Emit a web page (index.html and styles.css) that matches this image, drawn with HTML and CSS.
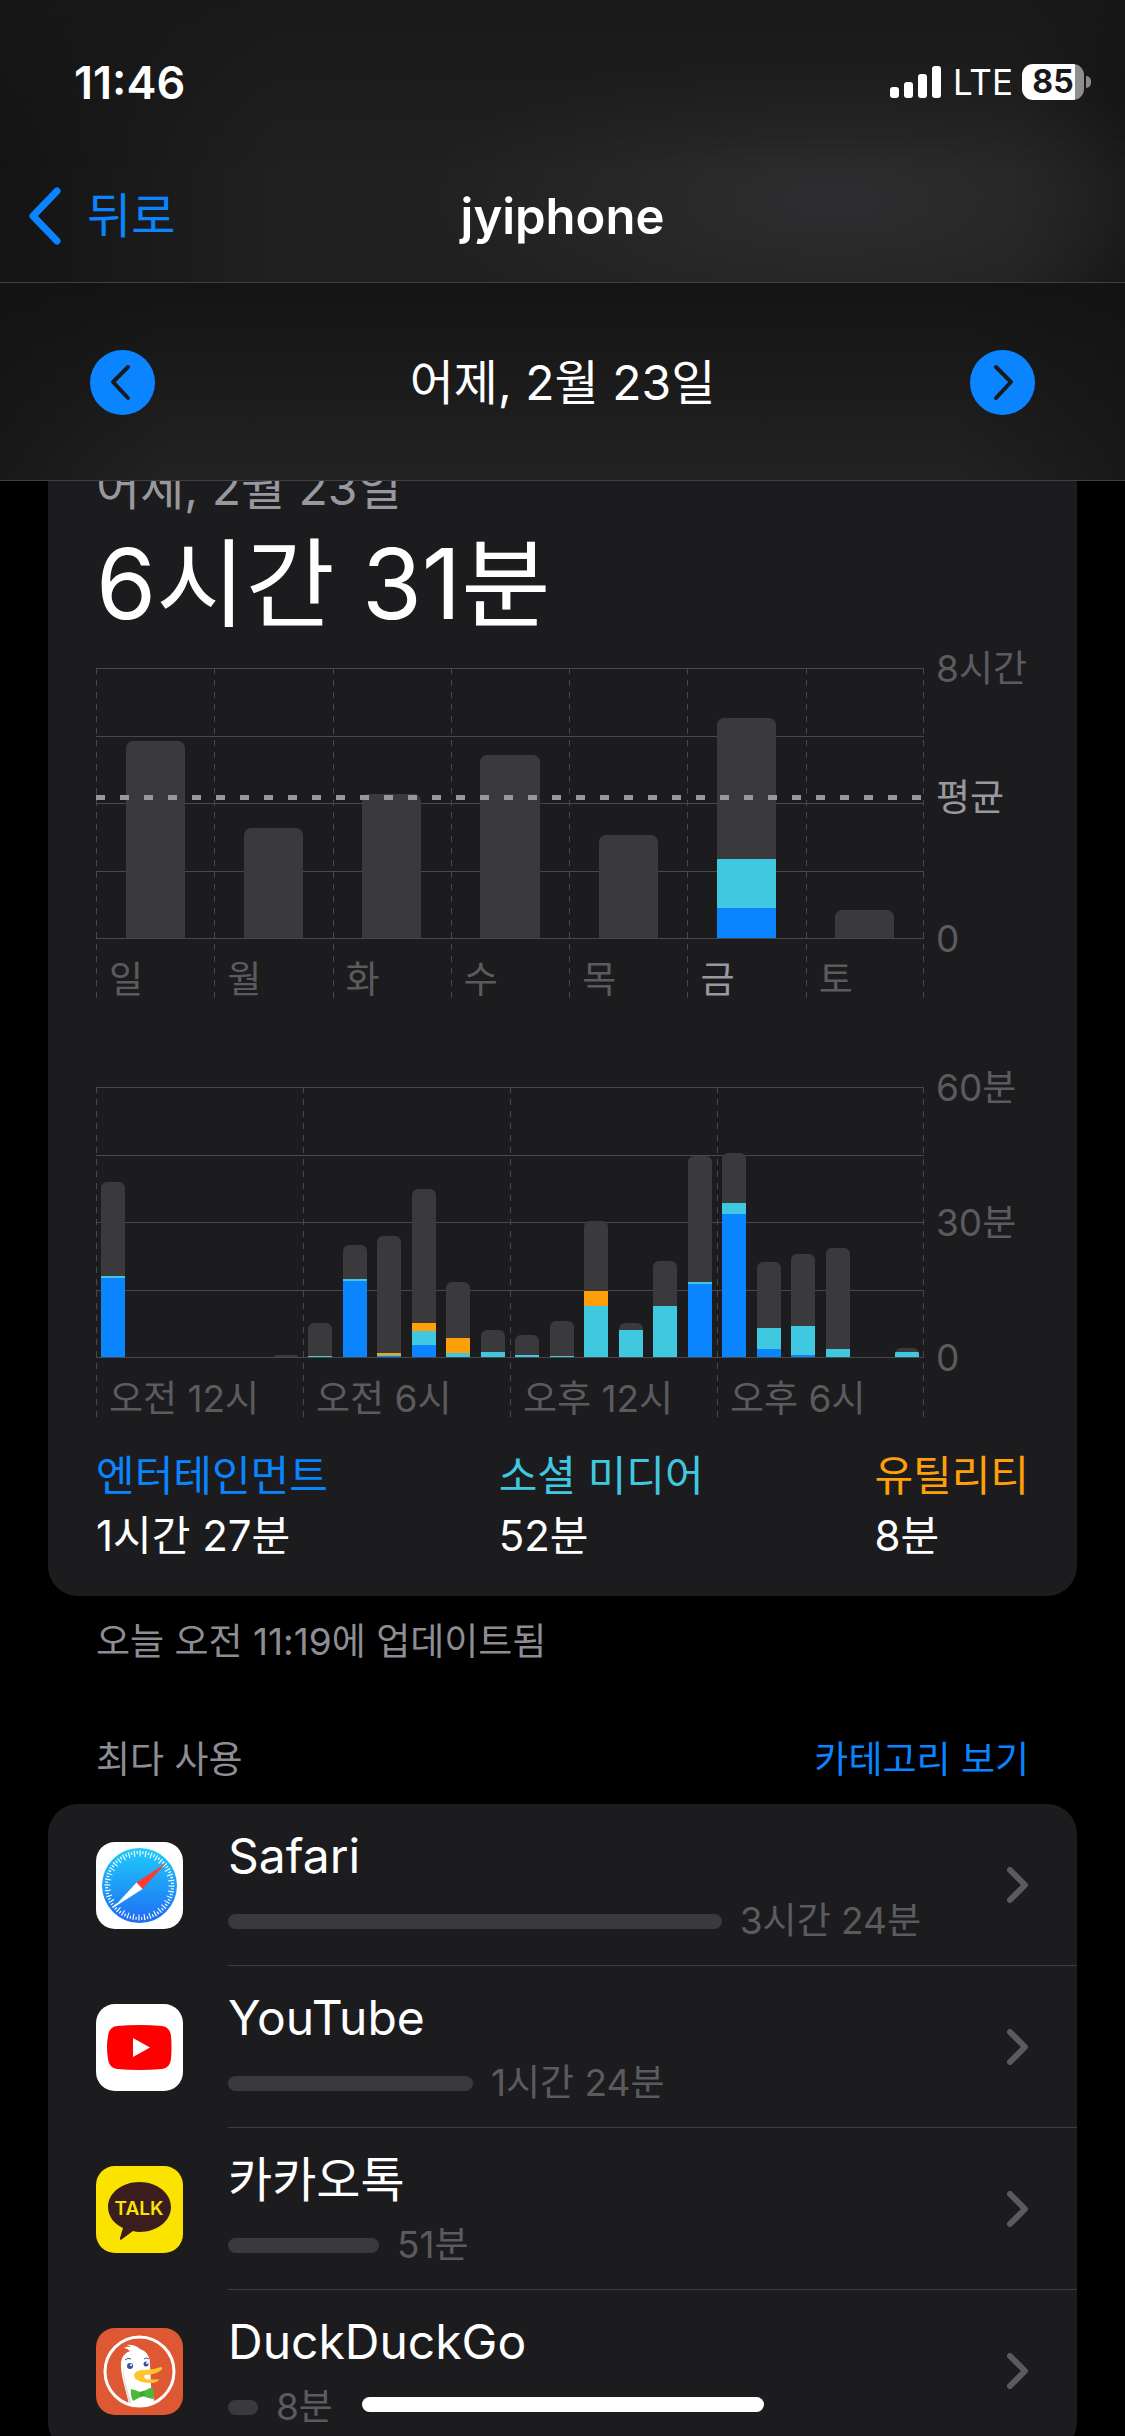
FILE: index.html
```html
<!DOCTYPE html>
<html lang="ko">
<head>
<meta charset="utf-8">
<meta name="viewport" content="width=device-width, initial-scale=1">
<title>jyiphone</title>
<link rel="stylesheet" href="styles.css">
</head>
<body>
<header class="top">
  <div class="status">
    <span class="time">11:46</span>
    <div class="status-right">
      <svg class="signal" viewBox="0 0 51 32" aria-hidden="true">
        <rect x="0" y="21" width="9" height="11" rx="3"/>
        <rect x="14" y="16" width="9" height="16" rx="3"/>
        <rect x="28" y="8" width="9" height="24" rx="3"/>
        <rect x="42" y="0" width="9" height="32" rx="3"/>
      </svg>
      <span class="lte">LTE</span>
      <span class="battery"><span class="level">85</span></span>
    </div>
  </div>
  <nav class="nav">
    <button class="back" type="button">
      <svg viewBox="0 0 33 58" aria-hidden="true"><path d="M29 4 L5 29 L29 54"/></svg>
      <span class="ko">뒤로</span>
    </button>
    <h1>jyiphone</h1>
  </nav>
  <div class="datebar">
    <button class="arrow" type="button" aria-label="이전">
      <svg viewBox="0 0 65 65" aria-hidden="true"><path d="M38 17 L23 32 L38 48"/></svg>
    </button>
    <span class="ko">어제, 2월 23일</span>
    <button class="arrow" type="button" aria-label="다음">
      <svg viewBox="0 0 65 65" aria-hidden="true"><path d="M26 17 L41 32 L26 48"/></svg>
    </button>
  </div>
</header>

<main>
<section class="card summary">
  <p class="day">어제, 2월 23일</p>
  <p class="total">6시간 31분</p>

  <div class="chart">
    <div class="plot" id="week">
      <div class="lines"><i></i><i></i><i></i><i></i></div>
    </div>
    <div class="axis">
      <span>8시간</span>
      <span>0</span>
      <span class="avg-label">평균</span>
    </div>
  </div>

  <div class="chart hours">
    <div class="plot" id="day">
      <div class="lines"><i></i><i></i><i></i><i></i></div>
    </div>
    <div class="axis">
      <span>60분</span>
      <span>30분</span>
      <span>0</span>
    </div>
  </div>

  <dl class="legend">
    <div><dt class="blue-text">엔터테인먼트</dt><dd>1시간 27분</dd></div>
    <div><dt class="teal-text">소셜 미디어</dt><dd>52분</dd></div>
    <div><dt class="orange-text">유틸리티</dt><dd>8분</dd></div>
  </dl>
</section>
<p class="updated">오늘 오전 11:19에 업데이트됨</p>

<div class="section-head">
  <h2>최다 사용</h2>
  <button type="button">카테고리 보기</button>
</div>

<section class="card apps">
  <a class="app" href="#safari">
    <svg class="icon" viewBox="0 0 87 87" aria-hidden="true">
      <defs>
        <linearGradient id="sky" x1="0" y1="0" x2="0" y2="1">
          <stop offset="0" stop-color="#1fcdfb"/>
          <stop offset="1" stop-color="#1f6bf2"/>
        </linearGradient>
      </defs>
      <rect width="87" height="87" rx="19" fill="#fff"/>
      <circle cx="43.5" cy="43.5" r="37.5" fill="url(#sky)"/>
      <circle cx="43.5" cy="43.5" r="32" fill="none" stroke="#fff" stroke-width="6" stroke-dasharray="1 4" pathLength="180"/>
      <circle cx="43.5" cy="43.5" r="33" fill="none" stroke="#fff" stroke-width="3" stroke-dasharray="1 4" stroke-dashoffset="2.5" pathLength="180"/>
      <path d="M70 21 L46.5 47 L40.5 40.5 Z" fill="#ff3b30"/>
      <path d="M17 66 L40.5 40.5 L46.5 47 Z" fill="#fff"/>
    </svg>
    <div class="info">
      <span class="name">Safari</span>
      <span class="usage"><i style="width:66.1%"></i>3시간 24분</span>
    </div>
    <svg class="chev" viewBox="0 0 22 36" aria-hidden="true"><path d="M3 3 L18 18 L3 33"/></svg>
  </a>
  <a class="app" href="#youtube">
    <svg class="icon" viewBox="0 0 87 87" aria-hidden="true">
      <rect width="87" height="87" rx="19" fill="#fff"/>
      <path d="M12 32 Q13 23 21 22 Q43 20 66 22 Q74 23 75 32 Q76 43 75 55 Q74 64 66 65 Q43 67 21 65 Q13 64 12 55 Q10 43 12 32 Z" fill="#f00"/>
      <path d="M37 34 L54 43.5 L37 53 Z" fill="#fff"/>
    </svg>
    <div class="info">
      <span class="name">YouTube</span>
      <span class="usage"><i style="width:32.8%"></i>1시간 24분</span>
    </div>
    <svg class="chev" viewBox="0 0 22 36" aria-hidden="true"><path d="M3 3 L18 18 L3 33"/></svg>
  </a>
  <a class="app" href="#kakaotalk">
    <svg class="icon" viewBox="0 0 87 87" aria-hidden="true">
      <rect width="87" height="87" rx="19" fill="#fbe300"/>
      <path d="M43.5 16 C61 16 75 27 75 41 C75 55 61 66 43.5 66 Q40 66 37 65 L25.5 73.5 Q23.5 74.5 24 72 L27 62 C18 58 12 50 12 41 C12 27 26 16 43.5 16 Z" fill="#3b1d1d"/>
      <text x="43" y="49" class="talk">TALK</text>
    </svg>
    <div class="info">
      <span class="name">카카오톡</span>
      <span class="usage"><i style="width:20.2%"></i>51분</span>
    </div>
    <svg class="chev" viewBox="0 0 22 36" aria-hidden="true"><path d="M3 3 L18 18 L3 33"/></svg>
  </a>
  <a class="app" href="#duckduckgo">
    <svg class="icon" viewBox="0 0 87 87" aria-hidden="true">
      <rect width="87" height="87" rx="19" fill="#de5833"/>
      <path d="M33 76 C30 62 24 46 25 34 Q26 26 34 23 Q31 20 28 20 Q31 18 35 19 Q33 17 30 17 Q38 16 44 21 Q54 24 54 36 L55 58 L58 73 Q46 82 33 76 Z" fill="#fff"/>
      <path d="M27 36 Q27 55 33 75 L36 76 Q28 54 27 36 Z" fill="#ddd"/>
      <circle cx="34" cy="38" r="3" fill="#3a5398"/>
      <circle cx="50" cy="36" r="2.5" fill="#3a5398"/>
      <circle cx="35" cy="37" r="1" fill="#fff"/>
      <circle cx="51" cy="35" r="1" fill="#fff"/>
      <path d="M29 32 Q32 29 35 31 M48 31 Q50 29 53 31" fill="none" stroke="#3a5398" stroke-width="1"/>
      <path d="M38 47 Q39 42 48 42 Q57 42 65 39 Q68 40 64 43 Q58 47 49 47 Q47 49 50 51 Q57 52 63 51 Q62 55 54 55 Q38 54 38 47 Z" fill="#fec52e"/>
      <path d="M35 61 Q40 62 44 64 Q51 62 56 59 Q59 65 57 71 Q51 70 47 68 Q42 70 37 73 Q34 67 35 61 Z" fill="#4cb93c"/>
      <path d="M44 64 L48 63 L49 68 L44 69 Z" fill="#3ca82b"/>
      <circle cx="43.5" cy="43.5" r="34.5" fill="none" stroke="#fff" stroke-width="3"/>
    </svg>
    <div class="info">
      <span class="name">DuckDuckGo</span>
      <span class="usage"><i style="width:4%"></i>8분</span>
    </div>
    <svg class="chev" viewBox="0 0 22 36" aria-hidden="true"><path d="M3 3 L18 18 L3 33"/></svg>
  </a>
</section>
</main>
<div class="home"></div>
<script src="charts.js"></script>
</body>
</html>
```
FILE: charts.js
```js
// each bar: [total, entertainment, social, utility]
// week is in minutes out of 8 hours, day is in minutes out of 60
var week = [
  { label: '일', bars: [[350]] },
  { label: '월', bars: [[195]] },
  { label: '화', bars: [[256]] },
  { label: '수', bars: [[325]] },
  { label: '목', bars: [[183]] },
  { label: '금', bars: [[391, 54, 86]], current: true },
  { label: '토', bars: [[50]] }
];

var day = [
  { label: '오전 12시', bars: [[38.9, 17.6, 0.4], [0], [0], [0], [0], [0.4]] },
  { label: '오전 6시', bars: [[7.6, 0, 0.2], [24.9, 16.9, 0.4], [26.9, 0.3, 0.2, 0.4], [37.3, 2.7, 3.1, 1.8], [16.7, 0, 0.9, 3.3], [6, 0, 1.1]] },
  { label: '오후 12시', bars: [[4.9, 0, 0.4], [8, 0, 0.2], [30.2, 0, 11.3, 3.3], [7.6, 0, 6], [21.3, 0, 11.3], [44.7, 16.2, 0.4]] },
  { label: '오후 6시', bars: [[45.3, 31.8, 2.4], [21.1, 1.8, 4.7], [22.9, 0.4, 6.4], [24.2, 0, 1.8], [0], [2, 0, 1.1]] }
];

var colors = ['blue', 'teal', 'orange'];

function draw(id, groups, max) {
  var plot = document.getElementById(id);
  groups.forEach(function (g) {
    var html = '<div class="bars">';
    g.bars.forEach(function (b) {
      html += '<div class="bar" style="height:' + (b[0] / max * 100) + '%">';
      for (var i = 3; i > 0; i--) {
        if (b[i]) {
          html += '<div class="' + colors[i - 1] + '" style="height:' + (b[i] / b[0] * 100) + '%"></div>';
        }
      }
      html += '</div>';
    });
    html += '</div><span class="label">' + g.label + '</span>';

    var el = document.createElement('div');
    el.className = g.current ? 'group current' : 'group';
    el.innerHTML = html;
    plot.appendChild(el);
  });
}

draw('week', week, 480);
draw('day', day, 60);

var avg = document.createElement('div');
avg.className = 'average';
document.getElementById('week').appendChild(avg);
```
FILE: styles.css
```css
* {
  box-sizing: border-box;
}

body {
  margin: 0;
  height: 100vh;
  overflow: hidden;
  background: #000;
  color: #fff;
  font-family: Inter, "Noto Sans CJK KR", sans-serif;
  font-size: 37px;
}

h1, h2, p, dl, dd {
  margin: 0;
  font-weight: 400;
}

button {
  padding: 0;
  border: 0;
  background: none;
  color: #0a84ff;
  font: inherit;
}

a {
  color: inherit;
  text-decoration: none;
}

svg {
  display: block;
}

/* header */
.top {
  position: fixed;
  top: 0;
  left: 0;
  right: 0;
  z-index: 2;
  background: #181818;
}

/* soft glow behind the bar */
.top::before {
  content: "";
  position: absolute;
  z-index: -1;
  top: 0;
  left: 0;
  right: 0;
  height: 282px;
  background:
    radial-gradient(ellipse 420px 150px at 74% 200px, #2e2e30, transparent),
    linear-gradient(to right, #141414, #202020 25%, #202020 90%, #141414);
  mask-image: linear-gradient(rgba(0, 0, 0, .2), #000 60%);
}

.status {
  display: flex;
  justify-content: space-between;
  align-items: center;
  height: 150px;
  padding: 14px 34px 0 74px;
}

.time {
  font-size: 45px;
  font-weight: 600;
}

.status-right {
  display: flex;
  align-items: center;
}

.signal {
  width: 51px;
  height: 32px;
  margin-right: 12px;
  fill: #fff;
}

.lte {
  margin-right: 9px;
  font-size: 35px;
}

.battery {
  position: relative;
  width: 69px;
  height: 36px;
}

.battery::after {
  content: "";
  position: absolute;
  right: 0;
  top: 12px;
  width: 5px;
  height: 12px;
  border-radius: 0 5px 5px 0;
  background: #8a8a8a;
}

.level {
  display: block;
  width: 62px;
  border-radius: 11px;
  background: linear-gradient(to right, #fff 53px, #8e8e8e 53px);
  color: #18181a;
  font-size: 32px;
  font-weight: 700;
  line-height: 36px;
  text-align: center;
}

.nav {
  display: grid;
  grid-template-columns: 1fr auto 1fr;
  align-items: center;
  height: 133px;
  padding: 0 28px;
  border-bottom: 1px solid #404042;
}

.ko {
  padding-bottom: 8px;
  font-size: 48px;
}

.back {
  display: flex;
  align-items: center;
  gap: 26px;
}

.back svg {
  width: 33px;
  height: 58px;
  fill: none;
  stroke: #0a84ff;
  stroke-width: 7px;
  stroke-linecap: round;
  stroke-linejoin: round;
}

h1 {
  font-size: 49px;
  font-weight: 600;
}

.datebar {
  display: flex;
  justify-content: space-between;
  align-items: center;
  height: 198px;
  padding: 2px 90px 0;
  border-bottom: 1px solid #404042;
  background:
    linear-gradient(to right, rgba(18, 18, 18, .6), transparent 15%, transparent 85%, rgba(18, 18, 18, .6)),
    linear-gradient(#141414, #222223);
}

.arrow {
  width: 65px;
  height: 65px;
  border-radius: 50%;
  background: #0a84ff;
}

.arrow svg {
  fill: none;
  stroke: #1a1a1c;
  stroke-width: 4px;
  stroke-linecap: round;
  stroke-linejoin: round;
}

/* summary card */
main {
  padding: 420px 48px 0;
}

.card {
  border-radius: 30px;
  background: #1c1c1e;
}

.summary {
  padding: 32px 48px 30px;
}

.day {
  color: #98989f;
  font-size: 48px;
  line-height: 72px;
}

.total {
  margin-bottom: 24px;
  font-size: 97px;
  line-height: 120px;
}

.chart {
  display: grid;
  grid-template-columns: 1fr 93px;
  gap: 12px;
}

.hours {
  margin-top: 89px;
}

.plot {
  position: relative;
  display: flex;
  height: 330px;
}

.lines {
  position: absolute;
  top: 0;
  left: 0;
  right: 0;
  height: 271px;
  display: flex;
  flex-direction: column;
  border-bottom: 1px solid #48484a;
}

.lines i {
  flex: 1;
  border-top: 1px solid #48484a;
}

.group {
  position: relative;
  flex: 1;
}

/* dashed dividers */
.group::before,
.plot::after {
  content: "";
  position: absolute;
  top: 0;
  bottom: 0;
  left: 0;
  width: 1px;
  background: repeating-linear-gradient(#48484a 0 6px, transparent 6px 12px);
}

.plot::after {
  left: auto;
  right: 0;
}

.bars {
  position: relative;
  display: flex;
  align-items: flex-end;
  justify-content: space-around;
  height: 270px;
}

.bar {
  display: flex;
  flex-direction: column;
  justify-content: flex-end;
  width: 50%;
  border-radius: 7px 7px 0 0;
  background: #3a3a3c;
  overflow: hidden;
}

.hours .bar {
  width: 24px;
  border-radius: 6px 6px 0 0;
}

.blue { background: #0a84ff; }
.teal { background: #40c8e0; }
.orange { background: #ff9f0a; }

.label {
  display: block;
  padding: 21px 0 0 13px;
  color: #5b5b5e;
  line-height: 42px;
  white-space: nowrap;
}

.current .label {
  color: #98989f;
}

.average {
  position: absolute;
  top: 127px;
  left: 0;
  right: 0;
  height: 5px;
  background: repeating-linear-gradient(to right, #98989a 0 9px, transparent 9px 24px);
}

.axis {
  position: relative;
  display: flex;
  flex-direction: column;
  justify-content: space-between;
  height: 310px;
  margin-top: -19px;
  color: #5b5b5e;
  line-height: 40px;
  white-space: nowrap;
}

.avg-label {
  position: absolute;
  top: 129px;
  color: #98989f;
}

.legend {
  display: flex;
  justify-content: space-between;
  margin-top: 29px;
  font-size: 42px;
  line-height: 60px;
}

.blue-text { color: #0a84ff; }
.teal-text { color: #40c8e0; }
.orange-text { color: #ff9f0a; }

.updated {
  margin: 24px 48px 0;
  color: #8d8d93;
  line-height: 44px;
}

.section-head {
  display: flex;
  justify-content: space-between;
  margin: 74px 48px 22px;
  line-height: 44px;
}

.section-head h2 {
  color: #8d8d93;
  font-size: 37px;
}

/* app list */
.app {
  position: relative;
  display: flex;
  align-items: center;
  height: 162px;
  padding: 0 48px;
}

.app + .app::before {
  content: "";
  position: absolute;
  top: -1px;
  left: 180px;
  right: 0;
  height: 1px;
  background: #3d3d40;
}

.icon {
  width: 87px;
  height: 87px;
}

.talk {
  fill: #fbe300;
  font-size: 19px;
  font-weight: 600;
  text-anchor: middle;
}

.info {
  flex: 1;
  margin: 0 32px 0 45px;
}

.name {
  display: block;
  font-size: 48px;
  line-height: 72px;
}

.usage {
  display: flex;
  align-items: center;
  gap: 18px;
  color: #5b5b5e;
  line-height: 58px;
}

.usage i {
  height: 15px;
  border-radius: 8px;
  background: #3a3a3c;
}

.chev {
  width: 22px;
  height: 36px;
  fill: none;
  stroke: #5b5b5e;
  stroke-width: 6px;
  stroke-linecap: round;
  stroke-linejoin: round;
}

.home {
  position: fixed;
  left: 50%;
  bottom: 24px;
  width: 402px;
  height: 15px;
  margin-left: -201px;
  border-radius: 8px;
  background: #fff;
}
```
